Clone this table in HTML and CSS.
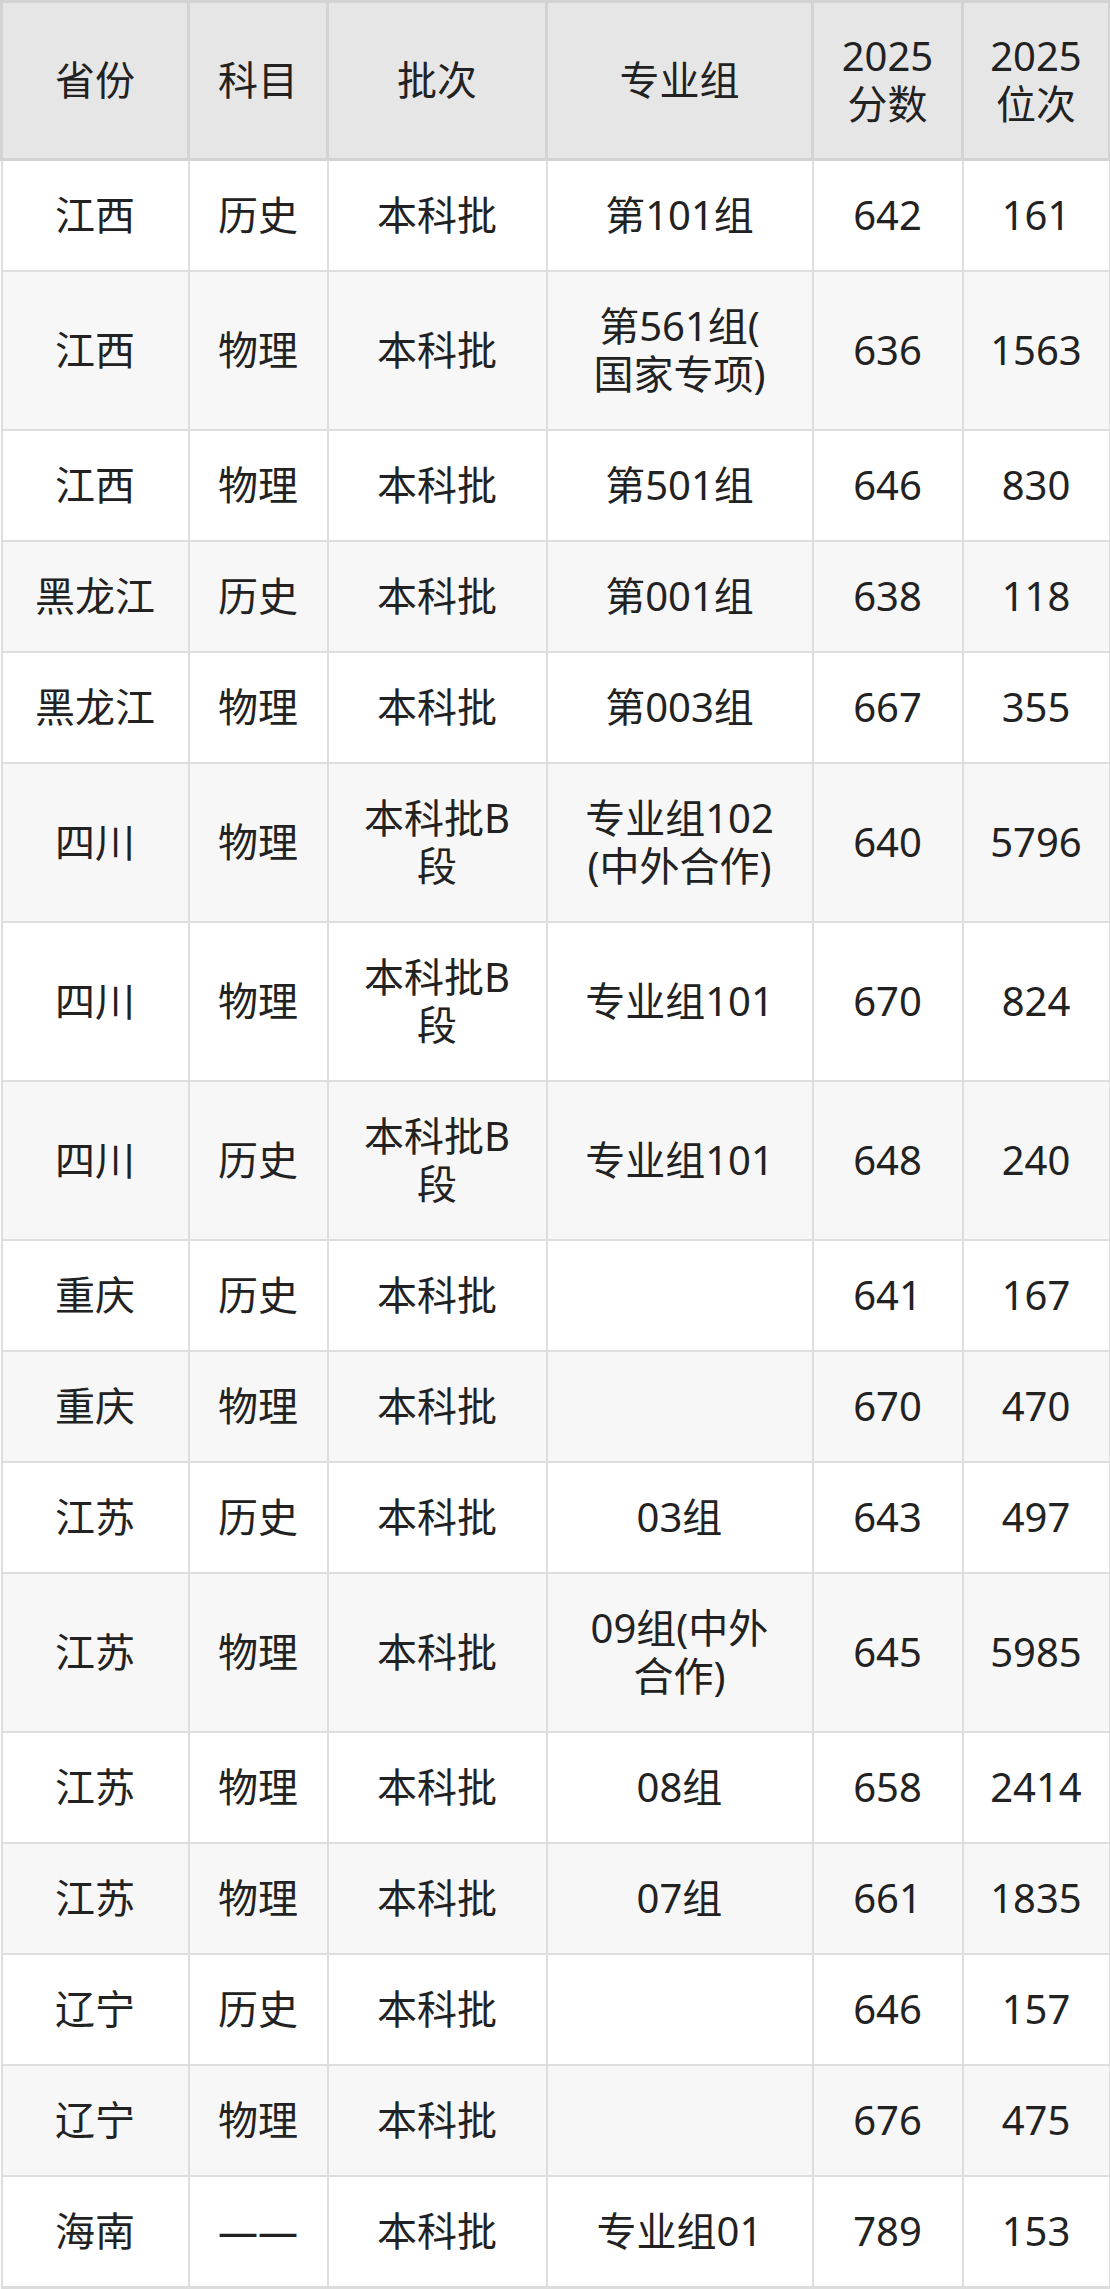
FILE: index.html
```html
<!DOCTYPE html>
<html lang="zh-CN">
<head>
<meta charset="utf-8">
<title>2025 分数</title>
<link rel="stylesheet" href="styles.css">
</head>
<body>
<table class="score-table">
  <colgroup>
    <col class="c-prov">
    <col class="c-subj">
    <col class="c-batch">
    <col class="c-group">
    <col class="c-score">
    <col class="c-rank">
  </colgroup>
  <thead>
    <tr>
      <th>省份</th>
      <th>科目</th>
      <th>批次</th>
      <th>专业组</th>
      <th>2025<br>分数</th>
      <th>2025<br>位次</th>
    </tr>
  </thead>
  <tbody>
    <tr><td>江西</td><td>历史</td><td>本科批</td><td>第101组</td><td>642</td><td>161</td></tr>
    <tr><td>江西</td><td>物理</td><td>本科批</td><td>第561组(<br>国家专项)</td><td>636</td><td>1563</td></tr>
    <tr><td>江西</td><td>物理</td><td>本科批</td><td>第501组</td><td>646</td><td>830</td></tr>
    <tr><td>黑龙江</td><td>历史</td><td>本科批</td><td>第001组</td><td>638</td><td>118</td></tr>
    <tr><td>黑龙江</td><td>物理</td><td>本科批</td><td>第003组</td><td>667</td><td>355</td></tr>
    <tr><td>四川</td><td>物理</td><td>本科批B<br>段</td><td>专业组102<br>(中外合作)</td><td>640</td><td>5796</td></tr>
    <tr><td>四川</td><td>物理</td><td>本科批B<br>段</td><td>专业组101</td><td>670</td><td>824</td></tr>
    <tr><td>四川</td><td>历史</td><td>本科批B<br>段</td><td>专业组101</td><td>648</td><td>240</td></tr>
    <tr><td>重庆</td><td>历史</td><td>本科批</td><td></td><td>641</td><td>167</td></tr>
    <tr><td>重庆</td><td>物理</td><td>本科批</td><td></td><td>670</td><td>470</td></tr>
    <tr><td>江苏</td><td>历史</td><td>本科批</td><td>03组</td><td>643</td><td>497</td></tr>
    <tr><td>江苏</td><td>物理</td><td>本科批</td><td>09组(中外<br>合作)</td><td>645</td><td>5985</td></tr>
    <tr><td>江苏</td><td>物理</td><td>本科批</td><td>08组</td><td>658</td><td>2414</td></tr>
    <tr><td>江苏</td><td>物理</td><td>本科批</td><td>07组</td><td>661</td><td>1835</td></tr>
    <tr><td>辽宁</td><td>历史</td><td>本科批</td><td></td><td>646</td><td>157</td></tr>
    <tr><td>辽宁</td><td>物理</td><td>本科批</td><td></td><td>676</td><td>475</td></tr>
    <tr><td>海南</td><td>——</td><td>本科批</td><td>专业组01</td><td>789</td><td>153</td></tr>
  </tbody>
</table>
</body>
</html>
```
FILE: styles.css
```css
html, body {
  margin: 0;
  padding: 0;
  background: #ffffff;
}

body {
  font-family: "Noto Sans", "Noto Sans CJK SC", sans-serif;
  color: #222222;
}

.score-table {
  width: 1108px;
  border-collapse: collapse;
  table-layout: fixed;
  font-size: 40px;
  line-height: 48px;
}

.c-prov { width: 187px; }
.c-subj { width: 139px; }
.c-batch { width: 219px; }
.c-group { width: 266px; }
.c-score { width: 150px; }
.c-rank { width: 147px; }

.score-table th,
.score-table td {
  text-align: center;
  vertical-align: middle;
  padding: 30px 4px 31px;
  font-weight: 400;
}

.score-table th {
  background: #e6e6e6;
  border: 3px solid #d3d3d3;
  padding: 29px 4px 30px;
}

.score-table td {
  border: 2px solid #dedede;
}

.score-table tbody tr:nth-child(even) td {
  background: #f7f7f7;
}

.score-table tbody tr:last-child td {
  border-bottom: 3px solid #dcdcdc;
}
```
